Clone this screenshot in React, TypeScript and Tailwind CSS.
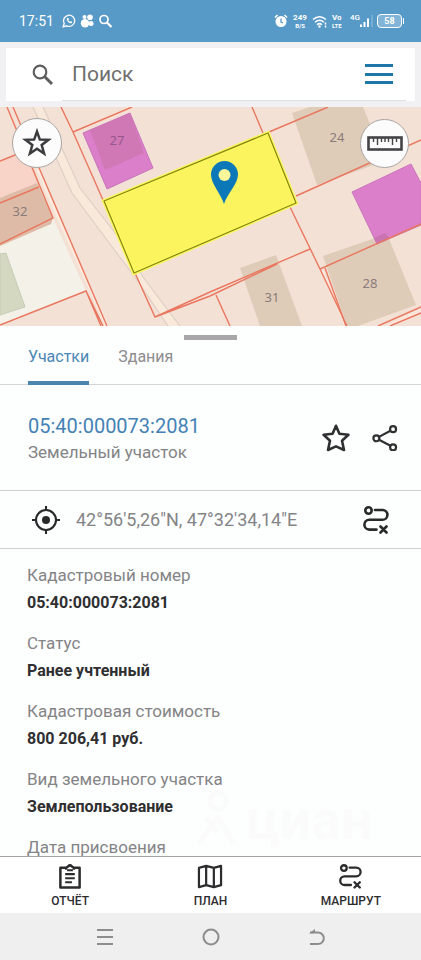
import React from 'react';

interface Detail {
  label: string;
  value: string;
}

const details: Detail[] = [
  { label: 'Кадастровый номер', value: '05:40:000073:2081' },
  { label: 'Статус', value: 'Ранее учтенный' },
  { label: 'Кадастровая стоимость', value: '800 206,41 руб.' },
  { label: 'Вид земельного участка', value: 'Землепользование' },
  { label: 'Дата присвоения', value: '' },
];

interface IconProps {
  className?: string;
}

const StarIcon: React.FC<IconProps> = ({ className }) => (
  <svg viewBox="0 0 28 28" className={className} fill="none" stroke="currentColor" strokeWidth="2.6" strokeLinejoin="round" aria-hidden="true">
    <path d="M14 1.8 17.4 9.8 26.4 10.8 20 16.8 22 26 14 22.400 6 26 8 16.8 1.6 10.8 10.600 9.8Z" />
  </svg>
);

const SharpStarIcon: React.FC<IconProps> = ({ className }) => (
  <svg viewBox="0 0 28 28" className={className} fill="none" stroke="currentColor" strokeWidth="2.2" aria-hidden="true">
    <path d="M14 4 16.5 11 24 11.2 18.1 15.800 20.2 23.200 14 19 7.8 23.200 9.9 15.800 4 11.2 11.5 11Z" />
  </svg>
);

const RulerIcon: React.FC<IconProps> = ({ className }) => (
  <svg viewBox="0 0 36 15" className={className} fill="none" stroke="currentColor" aria-hidden="true">
    <rect x="1.5" y="1.5" width="33" height="12" strokeWidth="2.6" />
    <path d="M6.500 2v4M10.500 2v7M14.500 2v4M18 2v4M21.500 2v4M25.500 2v7M29.500 2v4" strokeWidth="1.400" />
  </svg>
);

const ShareIcon: React.FC<IconProps> = ({ className }) => (
  <svg viewBox="0 0 28 28" className={className} fill="none" stroke="currentColor" strokeWidth="2.4" aria-hidden="true">
    <circle cx="4.700" cy="14.300" r="3.200" />
    <circle cx="22.700" cy="4.500" r="3.200" />
    <circle cx="22.700" cy="24" r="3.200" />
    <path d="M7.500 12.800 19.900 6.100M7.500 15.800 19.900 22.400" />
  </svg>
);

const TargetIcon: React.FC<IconProps> = ({ className }) => (
  <svg viewBox="0 0 28 28" className={className} fill="none" stroke="currentColor" strokeWidth="2.1" aria-hidden="true">
    <circle cx="14" cy="14" r="10" />
    <circle cx="14" cy="14" r="4" fill="currentColor" stroke="none" />
    <path d="M14 0v5M14 23v5M0 14h5M23 14h5" />
  </svg>
);

const RouteIcon: React.FC<IconProps> = ({ className }) => (
  <svg viewBox="0 0 26 28" className={className} fill="none" stroke="currentColor" strokeWidth="2.6" strokeLinecap="round" aria-hidden="true">
    <circle cx="5.500" cy="4.500" r="3.200" />
    <path d="M12 4h7.500a4.900 4.900 0 0 1 0 9.800H6.300a4.900 4.900 0 0 0 0 9.800h7.200" />
    <path d="M17.500 20.500l6 6M23.500 20.500l-6 6" />
  </svg>
);

const ReportIcon: React.FC<IconProps> = ({ className }) => (
  <svg viewBox="0 0 24 26" className={className} fill="none" stroke="currentColor" strokeWidth="2.6" strokeLinejoin="round" aria-hidden="true">
    <path d="M8 4H2v20.500h20V4h-6M8 6V4l2-1.500q2-2 4 0L16 4v2" />
    <path d="M7 10.500h10M7 14.800h10M7 19h7M9 6.500h6" strokeWidth="2.2" />
  </svg>
);

const PlanIcon: React.FC<IconProps> = ({ className }) => (
  <svg viewBox="0 0 26 26" className={className} fill="none" stroke="currentColor" strokeWidth="2.3" strokeLinejoin="round" aria-hidden="true">
    <path d="M1.500 4 9 2v20l-7.500 2ZM9 2l8 2v20l-8-2ZM17 4l7.500-2v20L17 24Z" />
  </svg>
);

const StatusBar: React.FC = () => (
  <div className="flex h-[42px] shrink-0 items-center bg-[#5799c7] pl-[19px] pr-[17px] text-white">
    <span className="text-sm">17:51</span>
    <svg viewBox="0 0 52 14" className="ml-2 h-[14px] w-[52px]" fill="none" stroke="currentColor" aria-hidden="true">
      <path d="M1.200 12.800 2.200 9.500A5.600 5.600 0 1 1 4.600 11.800Z" strokeWidth="1.300" />
      <path d="M4.800 4.300c0 3 2 5 4.700 5l.8-1.400-1.700-.9-.7.7q-1.200-.6-1.600-1.700l.6-.7-.7-1.500Z" fill="currentColor" stroke="none" />
      <g fill="currentColor" stroke="none">
        <circle cx="23" cy="9.200" r="4.200" />
        <circle cx="22.500" cy="3" r="2" />
        <circle cx="28" cy="3.200" r="2.800" />
        <circle cx="29" cy="9.500" r="2.500" />
      </g>
      <circle cx="42" cy="5.500" r="4" strokeWidth="1.700" />
      <path d="M45 8.500l4.500 4.500" strokeWidth="2.200" />
    </svg>
    <div className="ml-auto flex items-center">
      <svg viewBox="0 0 14 14" className="size-[14px]" aria-hidden="true">
        <circle cx="7" cy="7.500" r="5.500" fill="currentColor" />
        <path d="M1 3.500 3.500 1M13 3.500 10.500 1" stroke="currentColor" strokeWidth="1.600" />
        <path d="M7 4.500V8l2 1" fill="none" stroke="#5799c7" strokeWidth="1.300" />
      </svg>
      <div className="ml-1 w-4 text-center text-[8px] font-bold">
        <div className="leading-[9px]">249</div>
        <div className="text-[6px] leading-[8px]">B/S</div>
      </div>
      <svg viewBox="0 0 16 13" className="ml-1 h-[13px] w-4" fill="none" stroke="currentColor" strokeWidth="1.500" aria-hidden="true">
        <path d="M1 4.500q6.500-5.500 13 0M3 7.200q4.500-4 9 0M5 9.700q2.500-2.200 5 0" />
        <circle cx="7.500" cy="11.500" r="1.200" fill="currentColor" stroke="none" />
        <path d="M13.500 7.500v5" strokeDasharray="2 1" />
      </svg>
      <div className="ml-1 w-[14px] font-bold">
        <div className="text-[8px] leading-[9px]">Vo</div>
        <div className="text-[6px] leading-[8px]">LTE</div>
      </div>
      <span className="ml-1 self-start text-[8px] font-medium leading-[9px]">4G</span>
      <svg viewBox="0 0 13 12" className="h-3 w-[13px]" aria-hidden="true">
        <path d="M1 9.500V12M4.500 7v5M8 3.500V12" stroke="currentColor" strokeWidth="2" />
        <path d="M12 0v12" stroke="#82b4d7" strokeWidth="1.500" />
      </svg>
      <div className="ml-1 flex h-[14px] w-[25px] items-center justify-center rounded border border-white bg-[#82b4d7] text-[9px] font-bold leading-none">58</div>
      <div className="ml-px h-[6px] w-px bg-white" />
    </div>
  </div>
);

const SearchBar: React.FC = () => (
  <div className="shrink-0 bg-[#f1f1f3] p-[6px]">
    <form className="flex h-[53px] items-center bg-white pl-[26px] pr-[9px]" onSubmit={(e) => e.preventDefault()}>
      <svg viewBox="0 0 22 22" className="size-[22px] shrink-0 text-[#5f5f5f]" fill="none" stroke="currentColor" aria-hidden="true">
        <circle cx="8" cy="8" r="6.300" strokeWidth="2.200" />
        <path d="M12.500 12.500l7.500 7.500" strokeWidth="3" />
      </svg>
      <div className="ml-2 flex h-full min-w-0 flex-1 items-center border-b border-[#dce1e4] pl-[10px] pr-[13px]">
        <input type="text" aria-label="Поиск" placeholder="Поиск" className="min-w-0 flex-1 text-[21px] leading-7 text-[#555] outline-none placeholder:text-[#6f6f6f]" />
        <button type="button" aria-label="Меню" className="flex h-5 w-7 shrink-0 flex-col justify-between">
          <span className="h-[3px] w-full bg-[#1f76a8]" />
          <span className="h-[3px] w-full bg-[#1f76a8]" />
          <span className="h-[3px] w-full bg-[#1f76a8]" />
        </button>
      </div>
    </form>
  </div>
);

const CadastralMap: React.FC = () => (
  <div className="relative shrink-0">
    <svg viewBox="0 107 421 219" preserveAspectRatio="xMidYMid slice" className="h-[219px] w-full" role="img" aria-label="Карта участков">
      <rect x="0" y="107" width="421" height="219" fill="#f4e1d6" />
      {/* road */}
      <path d="M33 107 72 193 107 240 137 280 168 326H180L143 277 123 243 80 188 43 107Z" fill="#f9e9db" />
      <path d="M33 107 72 193 107 240 137 280 168 326M180 326 143 277 123 243 80 188 43 107" fill="none" stroke="#ddcfc5" strokeWidth="1.200" />
      {/* plots on the left */}
      <path d="M0 161 30 149 39 187 0 203Z" fill="#f7d3c8" />
      <path d="M0 244 53 218 86 291 0 325Z" fill="#f4f1e8" />
      <path d="M0 254 6 253 25 307 0 315Z" fill="#d4d8c1" stroke="#c8ccb8" />
      <path d="M0 198 37 183 39 187 53 218 51 224 0 246Z" fill="#debba7" />
      <path d="M38 170 57 215 107 326" fill="none" stroke="#fbeade" strokeWidth="3" />
      {/* buildings */}
      <path d="M83 133 130 113 153 168 107 189Z" fill="#db7fca" stroke="#c873ba" />
      <path d="M90 130 130 113 144 153 105 170Z" fill="#d078b5" />
      <path d="M292 113 310 107H363L385 161 317 185Z" fill="#decbb8" />
      <path d="M323 256 387 234 416 305 358 326H347Z" fill="#decbb8" />
      <path d="M240 268 276 255 302 326H260Z" fill="#decbb8" />
      <path d="M352 192 411 164 421 183V225L377 244Z" fill="#db7fca" stroke="#c977bd" />
      <path d="M377 244 374 238 385 233 390 238Z" fill="#c974b1" />
      <path d="M322 270 346 326M384 328 421 310" stroke="#fbe7db" strokeWidth="3" />
      {/* plot borders */}
      <g fill="none" stroke="#e9775f" strokeWidth="1.400">
        <path d="M7 107 53 218 0 244M13 107 40 170 107 326M0 161 20 153M0 203 39 187M0 325 86 291 103 326M86 291 101 326" />
        <path d="M61 107 73 132 103 200M73 132 132 107M135 273 155 317 210 292 310 249M155 317 210 296 277 264" />
        <path d="M252 107 263 133M269 132 328 107M296 196 421 140M290 207 320 269 347 326" />
        <path d="M320 269 421 224M325 268 346 326M216 295 230 326M378 326 421 307M390 326 421 313" />
      </g>
      {/* selected plot */}
      <path d="M104 201 268 133 296 203 134 273Z" fill="#fbf45f" stroke="#fbf85c" strokeWidth="4" />
      <path d="M104 201 268 133 296 203 134 273Z" fill="none" stroke="#878513" strokeWidth="1.200" />
      <g className="font-['Noto_Sans',sans-serif] text-[13px]" fill="#8a7b7b" textAnchor="middle">
        <text x="117" y="145" fill="#96578e">27</text>
        <text x="20" y="216">32</text>
        <text x="337" y="142">24</text>
        <text x="370" y="288">28</text>
        <text x="272" y="302">31</text>
      </g>
      <path d="M224 204C221 194 211 184 211 174.500a13.500 13.500 0 0 1 27 0C238 184 227 194 224 204Z" fill="#0c78b8" />
      <circle cx="224.500" cy="175" r="6" fill="#fbf79a" />
    </svg>
    <button type="button" aria-label="В избранное" className="absolute left-3 top-[11px] flex size-[50px] items-center justify-center rounded-full border border-[#a8a4a2] bg-[#fcfcfc] text-[#3c3c3f]">
      <SharpStarIcon className="size-8" />
    </button>
    <button type="button" aria-label="Линейка" className="absolute right-3 top-3 flex size-[49px] items-center justify-center rounded-full border border-[#a8a4a2] bg-[#fcfcfc] text-[#444448]">
      <RulerIcon className="h-[15px] w-9" />
    </button>
  </div>
);

const ObjectSheet: React.FC = () => (
  <main className="relative flex min-h-0 flex-1 flex-col overflow-hidden bg-[#fdfefe]">
    <div className="mx-auto mt-[9px] h-[5px] w-[53px] shrink-0 bg-[#a9a6aa]" />
    <div role="tablist" className="flex h-[45px] shrink-0 gap-[29px] border-b border-[#d5d5d7] pl-7 text-base">
      <button type="button" role="tab" aria-selected="true" className="-mb-px border-b-4 border-[#4a86ad] pb-2 text-[#4b87b4]">Участки</button>
      <button type="button" role="tab" aria-selected="false" className="pb-[11px] text-[#8d8d8f]">Здания</button>
    </div>
    <div className="flex h-[106px] shrink-0 items-center border-b border-[#cfcfd1] pl-7 pr-[23px]">
      <div className="min-w-0 flex-1">
        <h1 className="text-xl leading-7 text-[#4482b5]">05:40:000073:2081</h1>
        <p className="text-[17px] leading-6 text-[#848486]">Земельный участок</p>
      </div>
      <button type="button" aria-label="Добавить в избранное" className="text-[#303032]"><StarIcon className="size-7" /></button>
      <button type="button" aria-label="Поделиться" className="ml-[22px] text-[#303032]"><ShareIcon className="size-[26px]" /></button>
    </div>
    <div className="flex h-[58px] shrink-0 items-center border-b border-[#cfcfd1] pl-8 pr-8">
      <TargetIcon className="size-7 shrink-0 text-[#29292b]" />
      <span className="ml-4 flex-1 text-lg text-[#848486]">42°56'5,26"N, 47°32'34,14"E</span>
      <button type="button" aria-label="Построить маршрут" className="text-[#29292b]"><RouteIcon className="h-7 w-[26px]" /></button>
    </div>
    <dl className="min-h-0 flex-1 overflow-y-auto pl-[27px] pt-3 [scrollbar-width:none]">
      {details.map((item) => (
        <div key={item.label} className="h-[68px]">
          <dt className="text-[17px] leading-7 text-[#848486]">{item.label}</dt>
          <dd className="text-base font-bold leading-7 text-[#2f2f31]">{item.value}</dd>
        </div>
      ))}
    </dl>
    <div className="pointer-events-none absolute bottom-0 right-12 flex items-center text-[#fbfbfb]" aria-hidden="true">
      <svg viewBox="0 0 44 60" className="h-[60px] w-11" fill="none" stroke="currentColor" strokeWidth="5">
        <circle cx="24" cy="11" r="8" />
        <path d="M4 54 24 28 40 54M12 28 24 42" />
      </svg>
      <span className="ml-2 text-[56px] font-bold leading-[72px]">циан</span>
    </div>
  </main>
);

const BottomNav: React.FC = () => (
  <nav className="grid h-[57px] shrink-0 grid-cols-3 border-t border-[#a3a3a5] bg-white text-xs font-medium text-[#2c2c2e]">
    <button type="button" className="flex flex-col items-center justify-start pt-[7px]">
      <ReportIcon className="h-[25px] w-6" />
      <span className="mt-1 leading-4">ОТЧЁТ</span>
    </button>
    <button type="button" className="flex flex-col items-center justify-start pt-[7px]">
      <PlanIcon className="h-[25px] w-[26px]" />
      <span className="mt-1 leading-4">ПЛАН</span>
    </button>
    <button type="button" className="flex flex-col items-center justify-start pt-[7px]">
      <RouteIcon className="h-[25px] w-[23px]" />
      <span className="mt-1 leading-4">МАРШРУТ</span>
    </button>
  </nav>
);

const SystemNav: React.FC = () => (
  <div className="flex h-[47px] shrink-0 items-center justify-center gap-[89px] bg-[#efefef] text-[#8d8d8d]">
    <button type="button" aria-label="Недавние">
      <svg viewBox="0 0 16 18" className="h-[18px] w-4" stroke="currentColor" strokeWidth="2" aria-hidden="true"><path d="M0 2h16M0 9h16M0 16h16" /></svg>
    </button>
    <button type="button" aria-label="Домой">
      <svg viewBox="0 0 18 18" className="size-[18px]" fill="none" stroke="currentColor" strokeWidth="2" aria-hidden="true"><circle cx="9" cy="9" r="7.500" /></svg>
    </button>
    <button type="button" aria-label="Назад">
      <svg viewBox="0 0 16 18" className="h-[18px] w-4" fill="none" stroke="currentColor" strokeWidth="2" aria-hidden="true"><path d="M1 4.500h8a5.800 5.800 0 0 1 0 11.600H1" /><path d="M0 5.500 6 1v4Z" fill="currentColor" stroke="none" /></svg>
    </button>
  </div>
);

const App: React.FC = () => {
  return (
    <div className="flex h-screen flex-col font-[Roboto,sans-serif]">
      <StatusBar />
      <SearchBar />
      <CadastralMap />
      <ObjectSheet />
      <BottomNav />
      <SystemNav />
    </div>
  );
};

export default App;
